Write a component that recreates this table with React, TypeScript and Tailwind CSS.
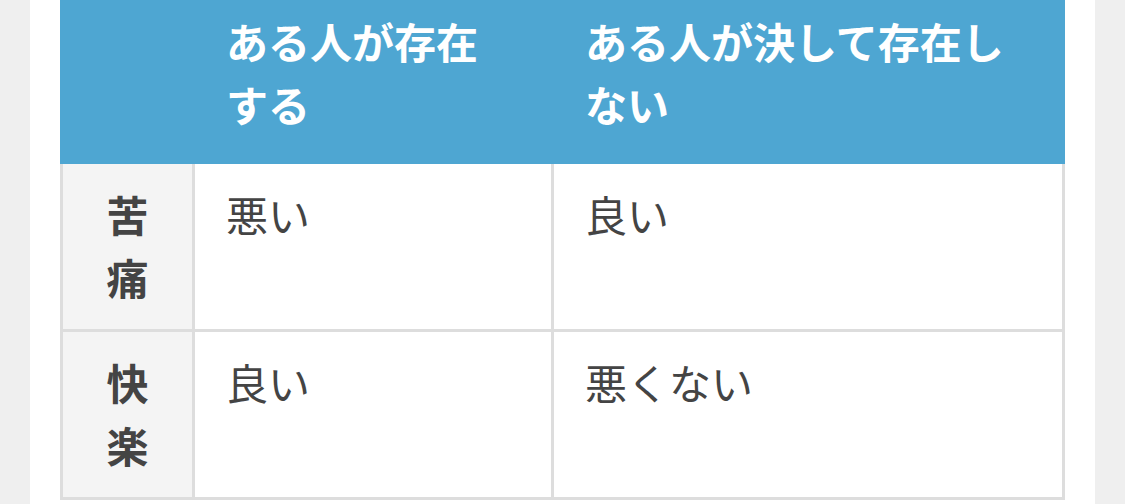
import React from 'react';

const rows = [
  { label: '苦痛', exists: '悪い', notExists: '良い' },
  { label: '快楽', exists: '良い', notExists: '悪くない' },
];

export default function App() {
  return (
    <div
      className="h-[504px] w-[1125px] overflow-hidden bg-[#efefef] px-[30px]"
      style={{ fontFamily: '"Noto Sans CJK JP", "Noto Sans", sans-serif' }}
    >
      <div className="flex h-full flex-col bg-white px-[30px]">
        {/* Comparison table */}
        <table className="mt-[-12px] w-[1002px] table-fixed border-collapse text-[42px] leading-[63px]">
          <colgroup>
            <col className="w-[132px]" />
            <col className="w-[359px]" />
            <col className="w-[511px]" />
          </colgroup>
          <thead>
            <tr className="bg-[#4ea6d2]">
              <th className="border-[3px] border-[#4ea6d2] pt-[18px] pr-[34px] pb-[26px] pl-[31px]" />
              <th className="border-[3px] border-[#4ea6d2] pt-[18px] pr-[34px] pb-[26px] pl-[31px] text-left font-bold text-white">
                ある人が存在する
              </th>
              <th className="border-[3px] border-[#4ea6d2] pt-[18px] pr-[34px] pb-[26px] pl-[31px] text-left font-bold text-white">
                ある人が決して存在しない
              </th>
            </tr>
          </thead>
          <tbody>
            {rows.map((row) => (
              <tr key={row.label}>
                <th className="border-[3px] border-[#dddddd] bg-[#f4f4f4] px-[29px] pt-[18px] pb-[21px] text-center align-top font-bold text-[#444444]">
                  {row.label}
                </th>
                <td className="border-[3px] border-[#dddddd] pt-[18px] pr-[34px] pb-[21px] pl-[31px] align-top text-[#444444]">
                  {row.exists}
                </td>
                <td className="border-[3px] border-[#dddddd] pt-[18px] pr-[34px] pb-[21px] pl-[31px] align-top text-[#444444]">
                  {row.notExists}
                </td>
              </tr>
            ))}
          </tbody>
        </table>
      </div>
    </div>
  );
}
